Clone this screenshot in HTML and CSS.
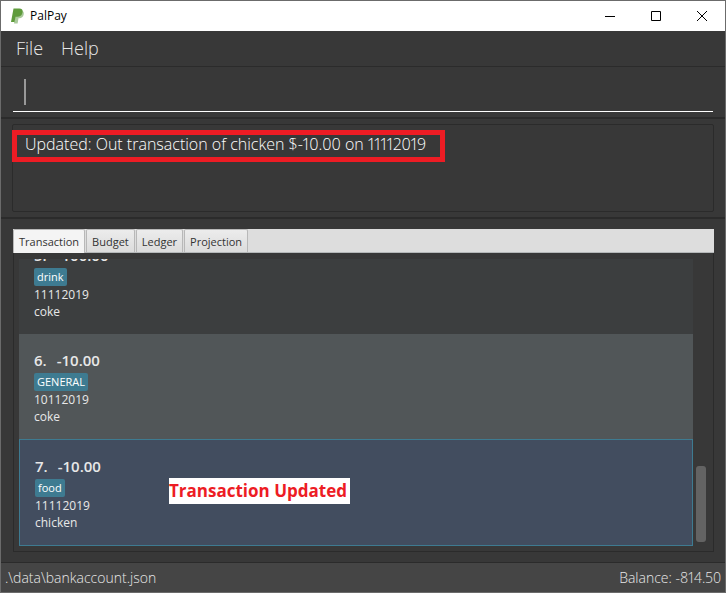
FILE: index.html
```html
<!DOCTYPE html>
<html lang="en">
<head>
    <meta charset="UTF-8">
    <meta name="viewport" content="width=device-width, initial-scale=1.0">
    <title>PalPay</title>
    <link rel="stylesheet" href="styles.css">
</head>
<body>
    <div class="window">
        <header class="title-bar">
            <svg class="app-icon" viewBox="0 0 14 16" width="14" height="16" aria-hidden="true">
                <path d="M4.5 2.5h6.5c2 1 2.400 3.200 1.200 5.400-.9 1.700-2.500 2.300-4.700 2.300L6.600 15.500H3z" fill="#a9c99a"/>
                <path d="M2.500.5h5.700c2.700 0 3.900 1.600 3.300 4-.6 2.900-2.500 4.300-5.300 4.300H4.500L3.500 14H0z" fill="#5f9b3c"/>
            </svg>
            <h1>PalPay</h1>
            <div class="window-buttons">
                <button type="button" aria-label="Minimize">
                    <svg viewBox="0 0 10 10" width="10" height="10"><path d="M0 5.500h10"/></svg>
                </button>
                <button type="button" aria-label="Maximize">
                    <svg viewBox="0 0 10 10" width="10" height="10"><path d="M.5.5h9v9h-9z"/></svg>
                </button>
                <button type="button" aria-label="Close">
                    <svg viewBox="0 0 10 10" width="10" height="10"><path d="M0 0l10 10M10 0L0 10"/></svg>
                </button>
            </div>
        </header>

        <nav class="menu-bar">
            <button type="button">File</button>
            <button type="button">Help</button>
        </nav>

        <div class="command-box">
            <input type="text" class="command-field" aria-label="Command">
            <span class="caret"></span>
        </div>

        <div class="result-pane">
            <div class="result-display">
                <p>Updated: Out transaction of chicken $-10.00 on 11112019</p>
                <span class="highlight"></span>
            </div>
        </div>

        <main class="main-pane">
            <div class="tabs" role="tablist">
                <button type="button" class="tab active" role="tab" aria-selected="true">Transaction</button>
                <button type="button" class="tab" role="tab">Budget</button>
                <button type="button" class="tab" role="tab">Ledger</button>
                <button type="button" class="tab" role="tab">Projection</button>
            </div>
            <div class="tab-content">
                <ul class="transaction-list">
                    <li class="transaction">
                        <h2><span>5.</span>-100.00</h2>
                        <span class="tag">drink</span>
                        <p>11112019</p>
                        <p>coke</p>
                    </li>
                    <li class="transaction even">
                        <h2><span>6.</span>-10.00</h2>
                        <span class="tag">GENERAL</span>
                        <p>10112019</p>
                        <p>coke</p>
                    </li>
                    <li class="transaction selected">
                        <h2><span>7.</span>-10.00</h2>
                        <span class="tag">food</span>
                        <p>11112019</p>
                        <p>chicken</p>
                        <strong class="note">Transaction Updated</strong>
                    </li>
                </ul>
                <div class="scrollbar"><div class="thumb"></div></div>
            </div>
        </main>

        <footer class="status-bar">
            <span>.\data\bankaccount.json</span>
            <span>Balance: -814.50</span>
        </footer>
    </div>
</body>
</html>
```

FILE: styles.css
```css
:root {
    --background-color: #383838;
    --line-color: #2b2b2b;
    --accent-color: #3e7b91;
    --mark-color: #ed1c24;
}

* {
    margin: 0;
    padding: 0;
    box-sizing: border-box;
}

body {
    font-family: 'Open Sans', 'Noto Sans', sans-serif;
    background-color: var(--background-color);
    color: #e8e8e8;
}

button {
    font-family: inherit;
    border: none;
    background: none;
}

.window {
    display: flex;
    flex-direction: column;
    height: 100vh;
    border: 1px solid #6b6b6b;
    overflow: hidden;
}

/* Title bar */
.title-bar {
    display: flex;
    align-items: center;
    height: 30px;
    padding-left: 10px;
    background-color: white;
    color: black;
}

.title-bar h1 {
    margin-left: 5px;
    font-size: 12px;
    font-weight: 400;
    line-height: 16px;
}

.window-buttons {
    display: flex;
    height: 100%;
    margin-left: auto;
}

.window-buttons button {
    display: flex;
    align-items: center;
    justify-content: center;
    width: 46px;
}

.window-buttons svg {
    fill: none;
    stroke: black;
}

/* Menu */
.menu-bar {
    display: flex;
    gap: 18px;
    height: 36px;
    padding: 0 15px 2px;
    border-bottom: 1px solid var(--line-color);
}

.menu-bar button {
    color: #e8e8e8;
    font-size: 18px;
    font-weight: 300;
}

/* Command */
.command-box {
    position: relative;
    height: 52px;
    padding: 6px 12px;
    border-bottom: 2px solid var(--line-color);
}

.command-field {
    width: 100%;
    height: 39px;
    padding: 0 12px;
    border: none;
    border-bottom: 1px solid white;
    outline: none;
    background: transparent;
    color: white;
    font-family: inherit;
    font-size: 18px;
    font-weight: 300;
}

.caret {
    position: absolute;
    left: 23px;
    top: 12px;
    width: 2px;
    height: 26px;
    background-color: #999;
}

/* Result */
.result-pane {
    padding: 5px 11px;
    border-bottom: 2px solid var(--line-color);
}

.result-display {
    position: relative;
    height: 88px;
    padding: 7px 12px;
    border: 1px solid var(--line-color);
    border-radius: 2px;
}

.result-display p {
    color: white;
    font-size: 16px;
    font-variant-numeric: proportional-nums;
    font-weight: 300;
    line-height: 24px;
}

.highlight {
    position: absolute;
    left: -1px;
    top: 5px;
    width: 433px;
    height: 32px;
    border: 5px solid var(--mark-color);
}

/* Tabs */
.main-pane {
    display: flex;
    flex: 1;
    flex-direction: column;
    min-height: 0;
    padding: 10px 11px;
}

.tabs {
    display: flex;
    gap: 1px;
    height: 24px;
    margin-left: 1px;
    border-bottom: 1px solid #b5b8b9;
    background-color: #ddd;
}

.tab {
    padding: 0 5px;
    border: 1px solid #b8b8b8;
    border-bottom: none;
    border-radius: 2px 2px 0 0;
    background: linear-gradient(#ececec, #dcdcdc);
    color: #333;
    font-size: 11px;
}

.tab.active {
    margin-bottom: -1px;
    background: #f4f4f4;
}

.tab-content {
    display: flex;
    flex: 1;
    min-height: 0;
    margin-left: 1px;
    padding: 6px 5px 5px;
    border: 1px solid var(--line-color);
    border-top: none;
}

/* Transactions */
.transaction-list {
    display: flex;
    flex: 1;
    flex-direction: column;
    justify-content: flex-end;
    overflow: hidden;
    list-style-type: none;
}

.transaction {
    position: relative;
    flex-shrink: 0;
    padding: 15px 15px 14px;
    background-color: #3c3e3f;
}

.transaction.even {
    background-color: #515658;
}

.transaction.selected {
    border: 1px solid var(--accent-color);
    background-color: #424d5f;
}

.transaction h2 {
    display: flex;
    gap: 10px;
    margin-bottom: 2px;
    font-size: 15px;
    font-weight: 600;
    line-height: 22px;
}

.transaction p {
    font-size: 12px;
    line-height: 17px;
}

.tag {
    display: block;
    width: fit-content;
    padding: 0 3px;
    border-radius: 2px;
    background-color: var(--accent-color);
    color: white;
    font-size: 11px;
    line-height: 18px;
}

.note {
    position: absolute;
    left: 149px;
    top: 38px;
    padding: 0 3px 0 0;
    background-color: white;
    color: var(--mark-color);
    font-size: 17px;
    line-height: 26px;
}

.scrollbar {
    display: flex;
    align-items: flex-end;
    padding: 0 2px 4px 3px;
}

.thumb {
    width: 10px;
    height: 76px;
    border-radius: 3px;
    background-color: #636363;
}

/* Status bar */
.status-bar {
    display: flex;
    align-items: center;
    justify-content: space-between;
    height: 30px;
    padding: 0 4px;
    border-top: 1px solid var(--line-color);
    background-color: #454545;
    font-size: 14px;
    font-variant-numeric: proportional-nums;
    font-weight: 300;
}
```
